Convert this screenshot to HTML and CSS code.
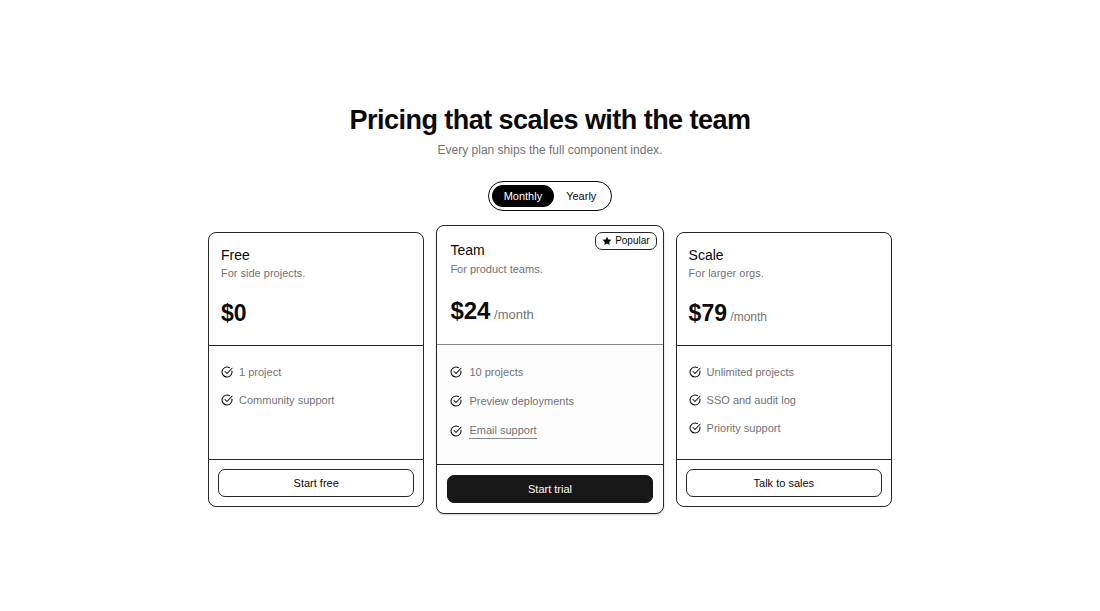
FILE: index.html
```html
<!DOCTYPE html>
<html lang="en">
<head>
    <meta charset="UTF-8">
    <meta name="viewport" content="width=device-width, initial-scale=1.0">
    <title>Pricing</title>
    <link rel="stylesheet" href="styles.css">
</head>
<body>
    <svg class="sprite" aria-hidden="true">
        <symbol id="check" viewBox="0 0 24 24">
            <path d="M21.8 10A10 10 0 1 1 17 3.34"/>
            <path d="m8 11 4 4L22 4.500"/>
        </symbol>
    </svg>
    <main class="pricing">
        <h1>Pricing that scales with the team</h1>
        <p class="subtitle">Every plan ships the full component index.</p>
        <div class="toggle" role="group" aria-label="Billing period">
            <button type="button" class="toggle-item active" aria-pressed="true">Monthly</button>
            <button type="button" class="toggle-item" aria-pressed="false">Yearly</button>
        </div>

        <div class="plans">
            <section class="card">
                <div class="card-header">
                    <h2>Free</h2>
                    <p class="description">For side projects.</p>
                    <p class="price">$0</p>
                </div>
                <ul class="features">
                    <li><svg class="icon"><use href="#check"/></svg>1 project</li>
                    <li><svg class="icon"><use href="#check"/></svg>Community support</li>
                </ul>
                <div class="card-footer">
                    <button type="button" class="btn">Start free</button>
                </div>
            </section>

            <section class="card featured">
                <span class="badge">
                    <svg class="star" viewBox="0 0 24 24" aria-hidden="true"><path d="M12 1.500l3.200 6.700 7.300 1-5.300 5.100 1.300 7.300L12 18.100l-6.500 3.500 1.300-7.300L1.500 9.200l7.300-1z"/></svg>
                    Popular
                </span>
                <div class="card-header">
                    <h2>Team</h2>
                    <p class="description">For product teams.</p>
                    <p class="price">$24 <span class="period">/month</span></p>
                </div>
                <ul class="features">
                    <li><svg class="icon"><use href="#check"/></svg>10 projects</li>
                    <li><svg class="icon"><use href="#check"/></svg>Preview deployments</li>
                    <li><svg class="icon"><use href="#check"/></svg><a href="#support">Email support</a></li>
                </ul>
                <div class="card-footer">
                    <button type="button" class="btn btn-primary">Start trial</button>
                </div>
            </section>

            <section class="card">
                <div class="card-header">
                    <h2>Scale</h2>
                    <p class="description">For larger orgs.</p>
                    <p class="price">$79 <span class="period">/month</span></p>
                </div>
                <ul class="features">
                    <li><svg class="icon"><use href="#check"/></svg>Unlimited projects</li>
                    <li><svg class="icon"><use href="#check"/></svg>SSO and audit log</li>
                    <li><svg class="icon"><use href="#check"/></svg>Priority support</li>
                </ul>
                <div class="card-footer">
                    <button type="button" class="btn">Talk to sales</button>
                </div>
            </section>
        </div>
    </main>
</body>
</html>
```
FILE: styles.css
```css
* {
    box-sizing: border-box;
}
body {
    font-family: "Liberation Sans", Arial, sans-serif;
    font-size: 11px;
    line-height: 16px;
    color: #0a0a0a;
    background-color: #fff;
    margin: 0;
    min-height: 100vh;
    display: flex;
    align-items: center;
    justify-content: center;
}
h1, h2, p, ul {
    margin: 0;
    padding: 0;
}
button {
    font: inherit;
    color: inherit;
    cursor: pointer;
}
.sprite {
    display: none;
}
.pricing {
    width: 100%;
    max-width: 684px;
    display: flex;
    flex-direction: column;
    align-items: center;
}
h1 {
    font-size: 27px;
    line-height: 32px;
    letter-spacing: -0.02em;
    text-align: center;
}
.subtitle {
    margin-top: 5px;
    font-size: 12px;
    line-height: 18px;
    color: #737373;
}
.toggle {
    display: flex;
    margin-top: 22px;
    padding: 3px;
    border: 1px solid #0a0a0a;
    border-radius: 15px;
}
.toggle-item {
    padding: 3px 12px;
    border: none;
    border-radius: 11px;
    background: none;
}
.toggle-item.active {
    background-color: #000;
    color: #fff;
}
.plans {
    display: grid;
    grid-template-columns: 20fr 21fr 20fr;
    gap: 12px;
    width: 100%;
    margin-top: 21px;
}
.card {
    position: relative;
    display: flex;
    flex-direction: column;
    border: 1px solid #262626;
    border-radius: 8px;
    background-color: #fff;
}
.card-header {
    padding: 12px 12px 16px;
    border-bottom: 1px solid #262626;
}
h2 {
    font-size: 14px;
    font-weight: normal;
    line-height: 20px;
}
.description {
    line-height: 17px;
    color: #737373;
}
.price {
    margin-top: 16px;
    font-size: 23px;
    font-weight: bold;
    line-height: 31px;
}
.period {
    margin-left: -3px;
    font-size: 12px;
    font-weight: normal;
    line-height: 16px;
    color: #737373;
}
.features {
    flex: 1;
    display: flex;
    flex-direction: column;
    gap: 12px;
    padding: 18px 12px 23px;
    list-style: none;
    color: #737373;
}
.features li {
    display: flex;
    align-items: center;
    gap: 6px;
}
.features a {
    color: inherit;
    text-decoration: none;
    border-bottom: 1px solid #8a8a8a;
}
.icon {
    width: 12px;
    height: 12px;
    fill: none;
    stroke: #0a0a0a;
    stroke-width: 2.1;
    stroke-linecap: round;
    stroke-linejoin: round;
    overflow: visible;
}
.card-footer {
    padding: 9px;
    border-top: 1px solid #262626;
}
.btn {
    display: block;
    width: 100%;
    padding: 5px 12px;
    border: 1px solid #262626;
    border-radius: 7px;
    background-color: #fff;
}
.btn-primary {
    border-color: #171717;
    background-color: #171717;
    color: #fafafa;
}

/* highlighted plan is slightly bigger than its neighbours */
.featured {
    margin: -7px 0;
    box-shadow: 0 1px 2px rgba(0, 0, 0, 0.2);
}
.featured .card-header {
    padding: 14px 13px 17px;
    border-bottom-color: #8a8a8a;
}
.featured .description {
    line-height: 18px;
}
.featured .price {
    font-size: 24px;
    line-height: 33px;
}
.featured .period {
    font-size: 13px;
}
.featured .features {
    gap: 13px;
    padding: 19px 13px 24px;
    background-color: #fdfdfd;
}
.featured .features li {
    gap: 7px;
}
.featured .card-footer {
    padding: 10px;
}
.badge {
    position: absolute;
    top: 6px;
    right: 6px;
    display: flex;
    align-items: center;
    gap: 3px;
    padding: 0 6px;
    border: 1px solid #262626;
    border-radius: 7px;
    font-size: 10px;
}
.star {
    width: 10px;
    height: 10px;
}
```
